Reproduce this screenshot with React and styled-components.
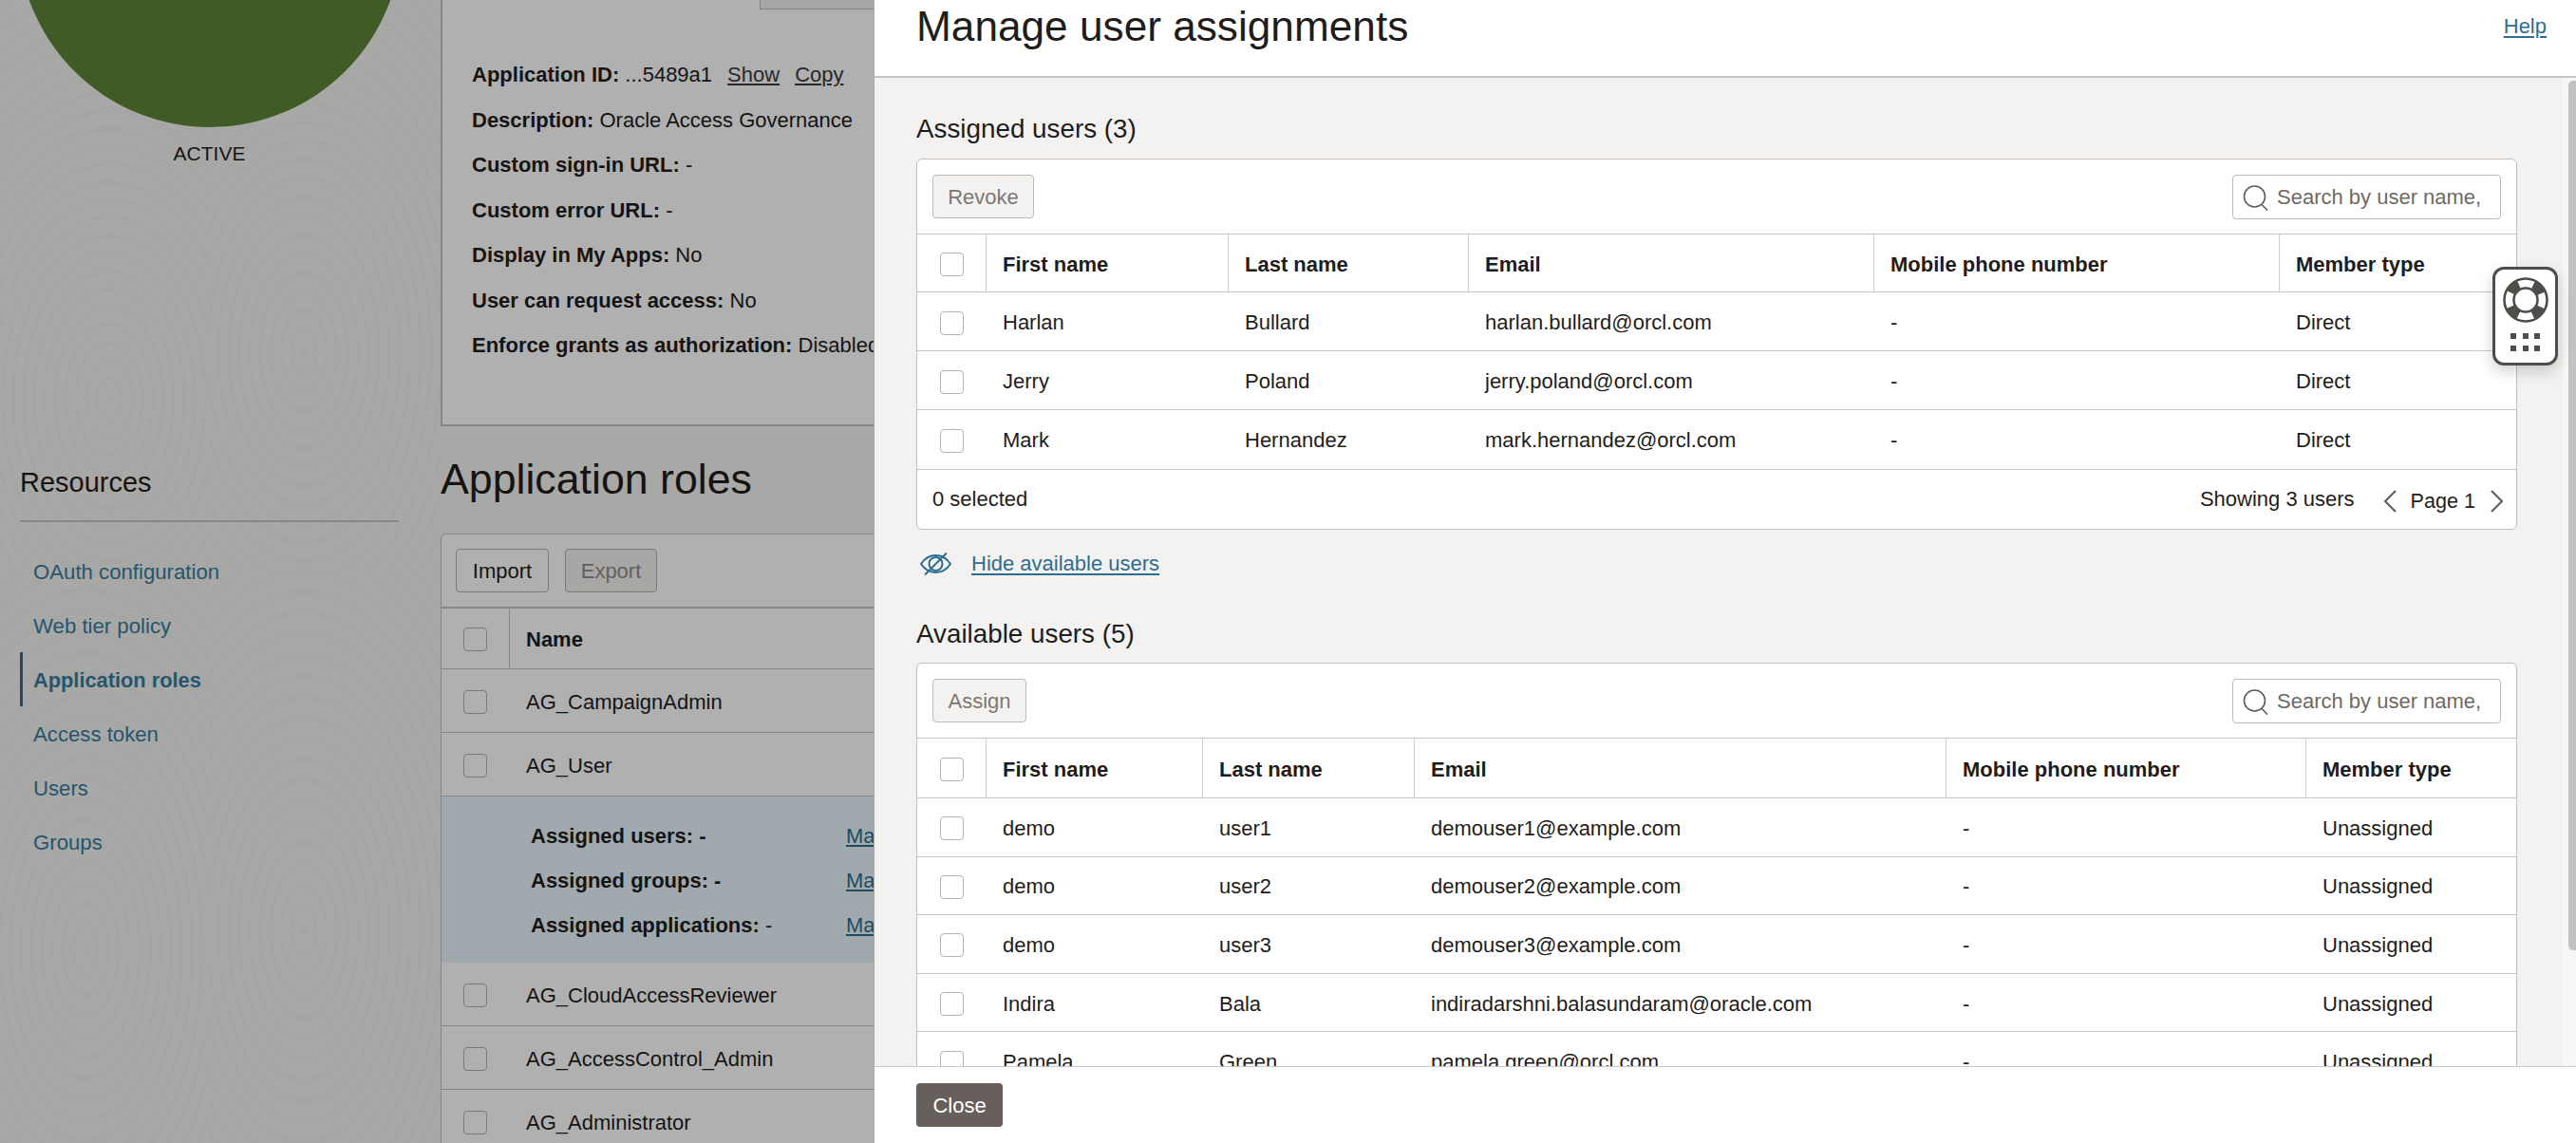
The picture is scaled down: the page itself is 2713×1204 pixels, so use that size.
import React from 'react';
import styled, { createGlobalStyle } from 'styled-components';

const GlobalStyle = createGlobalStyle`
  html, body {
    margin: 0;
    padding: 0;
    background: #fff;
  }
  * {
    box-sizing: border-box;
  }
  body {
    font-family: "Liberation Sans", Arial, sans-serif;
    font-size: 22px;
    color: #1f1d1b;
  }
`;

const Page = styled.div`
  position: relative;
  display: flex;
  width: 2713px;
  height: 1204px;
  overflow: hidden;
  background-color: #f3f3f1;
  background-image:
    repeating-radial-gradient(ellipse 100px 170px at 115px 420px, rgba(0, 0, 0, 0.007) 0 4px, transparent 4px 11px),
    repeating-radial-gradient(ellipse 100px 180px at 100px 370px, rgba(0, 0, 0, 0.007) 0 4px, transparent 4px 11px),
    repeating-radial-gradient(ellipse 120px 240px at 90px 400px, rgba(0, 0, 0, 0.007) 0 4px, transparent 4px 11px),
    repeating-radial-gradient(ellipse 120px 240px at 100px 380px, rgba(0, 0, 0, 0.007) 0 4px, transparent 4px 11px);
  background-size: 220px 600px, 244px 600px, 220px 604px, 244px 604px;
  background-position: 0 0, 220px 0, 0 600px, 220px 600px;
  background-repeat: no-repeat;
`;

const Sidebar = styled.aside`
  flex: 0 0 464px;
  min-width: 0;
  padding: 0 44px 0 21px;
`;

const StatusCircle = styled.div`
  width: 404px;
  height: 404px;
  margin: -270px -2.5px 0;
  border-radius: 50%;
  background: #5e8536;
`;

const StatusLabel = styled.div`
  margin-top: 13px;
  line-height: 30px;
  font-size: 21px;
  text-align: center;
`;

const ResourcesTitle = styled.h2`
  margin: 313px 0 0;
  height: 60px;
  padding-bottom: 24px;
  line-height: 36px;
  font-size: 29px;
  font-weight: 400;
  border-bottom: 2px solid #c4c4c2;
`;

const Nav = styled.nav`
  margin-top: 23px;
`;

const NavItem = styled.a`
  display: block;
  height: 57px;
  line-height: 59px;
  padding-left: 11px;
  border-left: 3px solid ${p => (p.$active ? '#2f6f8f' : 'transparent')};
  color: #367d9e;
  font-size: ${p => (p.$active ? 21.8 : 22.2)}px;
  font-weight: ${p => (p.$active ? 700 : 400)};
`;

const Main = styled.main`
  flex: 1;
  min-width: 0;
`;

const DetailPanel = styled.section`
  height: 449px;
  padding-bottom: 62px;
  background: #fff;
  border-left: 2px solid #c2c2c0;
  border-bottom: 2px solid #c2c2c0;
`;

const CutOffButton = styled.div`
  width: 300px;
  height: 10px;
  margin-left: 334px;
  margin-bottom: 45px;
  background: #f3f2f1;
  border-left: 1px solid #bbb;
  border-bottom: 1px solid #bbb;
`;

const DetailLine = styled.div`
  height: 47.5px;
  line-height: 47.5px;
  padding-left: 31px;
  white-space: nowrap;
`;

const Strong = styled.b`
  font-weight: 700;
`;

const PlainLink = styled.a`
  margin-left: ${p => p.$gap || 0}px;
  color: #3a3a38;
  text-decoration: underline;
`;

const RolesTitle = styled.h1`
  margin: 30px 0 31px;
  line-height: 52px;
  font-size: 44.7px;
  font-weight: 400;
`;

const RolesCard = styled.section`
  background: #fff;
  border-left: 1px solid #c4c4c2;
  border-top: 1px solid #c4c4c2;
  border-top-left-radius: 6px;
`;

const RolesToolbar = styled.div`
  display: flex;
  gap: 17px;
  height: 78px;
  padding: 15px 0 0 15px;
  border-bottom: 2px solid #c4c4c2;
`;

const RoleButton = styled.button`
  width: ${p => p.$width}px;
  height: 46px;
  padding: 2px 0 0;
  font: inherit;
  color: ${p => (p.$disabled ? '#8f8b88' : '#1f1d1b')};
  background: ${p => (p.$disabled ? '#f3f2f1' : '#fff')};
  border: 1px solid #b5b2af;
  border-radius: 4px;
`;

const RoleRow = styled.div`
  display: flex;
  align-items: center;
  height: ${p => p.$height || 67}px;
  border-bottom: 1px solid #c4c4c2;
  font-weight: ${p => (p.$head ? 700 : 400)};
`;

const RoleCheckCell = styled.div`
  flex: 0 0 72px;
  align-self: stretch;
  display: flex;
  align-items: center;
  padding: 2px 0 0 23px;
  border-right: ${p => (p.$head ? '1px solid #c4c4c2' : '1px solid transparent')};
`;

const RoleName = styled.div`
  padding: 3px 0 0 17px;
`;

const RoleDetails = styled.div`
  display: grid;
  grid-template-columns: 332px 1fr;
  align-content: start;
  height: 175px;
  padding: 18px 0 0 94px;
  background: #e8f6fc;
  grid-auto-rows: 47px;
  line-height: 47px;
`;

const RoleLink = styled.a`
  color: #2f6f8f;
  text-decoration: underline;
`;

const Scrim = styled.div`
  position: absolute;
  inset: 0;
  background: rgba(0, 0, 0, 0.31);
`;

const Drawer = styled.div`
  position: absolute;
  top: 0;
  right: 0;
  bottom: 0;
  left: 920px;
  display: flex;
  flex-direction: column;
  background: #fff;
  border-left: 1px solid #a8a8a6;
`;

const DrawerHeader = styled.header`
  flex: 0 0 82px;
  display: flex;
  justify-content: space-between;
  padding: 3px 31px 0 44px;
  border-bottom: 2px solid #c6c6c4;
`;

const DrawerTitle = styled.h1`
  margin: 0;
  line-height: 50px;
  font-size: 44.2px;
  font-weight: 400;
`;

const Link = styled.a`
  color: #2f6d90;
  text-decoration: underline;
  text-underline-offset: 3px;
`;

const HelpLink = styled(Link)`
  line-height: 50px;
`;

const DrawerBody = styled.div`
  position: relative;
  flex: 1;
  min-height: 0;
  overflow: hidden;
  padding: 37px 62px 0 44px;
  background: #f3f2f1;
`;

const ScrollTrack = styled.div`
  position: absolute;
  top: 0;
  right: 0;
  bottom: 0;
  width: 16px;
  padding: 3px 0 0 7px;
  background: #f7f6f5;
  border-left: 1px solid #eeeded;
`;

const ScrollThumb = styled.div`
  height: 916px;
  background: #c2c2c2;
  border-radius: 5px 0 0 5px;
`;

const SectionTitle = styled.h2`
  margin: ${p => p.$top || 0}px 0 ${p => p.$bottom}px;
  line-height: 34px;
  font-size: 27.8px;
  font-weight: 400;
`;

const Card = styled.section`
  background: #fff;
  border: 1px solid #c2bfbc;
  border-radius: 6px;
  overflow: hidden;
`;

const Toolbar = styled.div`
  display: flex;
  align-items: center;
  justify-content: space-between;
  height: 79px;
  padding: 0 16px;
  border-bottom: 1px solid #c9c7c5;
`;

const DisabledButton = styled.button`
  width: ${p => p.$width}px;
  height: 46px;
  padding: 2px 0 0;
  font: inherit;
  color: #7d7773;
  background: #f3f2f1;
  border: 1px solid #bdbab7;
  border-radius: 4px;
`;

const SearchBox = styled.div`
  display: flex;
  align-items: center;
  gap: 9px;
  width: 283px;
  height: 47px;
  padding: 2px 0 0 10px;
  background: #fff;
  border: 1px solid #bdbab7;
  border-radius: 4px;
  color: #6f6964;
  white-space: nowrap;
  overflow: hidden;
`;

const Row = styled.div`
  display: grid;
  grid-template-columns: ${p => p.$cols};
  height: ${p => p.$height}px;
  border-bottom: 1px solid ${p => (p.$last ? 'transparent' : '#c9c7c5')};
  font-weight: ${p => (p.$head ? 700 : 400)};
`;

const Cell = styled.div`
  display: flex;
  align-items: center;
  padding: 3px 0 0 17px;
  white-space: nowrap;
  border-right: ${p => (p.$divider ? '1px solid #d0cecc' : 'none')};
`;

const CheckCell = styled(Cell)`
  padding-left: 24px;
`;

const Checkbox = styled.span`
  display: block;
  width: 25px;
  height: 25px;
  background: #fff;
  border: 1px solid #b5b2af;
  border-radius: 4px;
`;

const CardFooter = styled.div`
  display: flex;
  align-items: center;
  justify-content: space-between;
  height: 63px;
  padding: 0 13px 0 16px;
  border-top: 1px solid #c9c7c5;
`;

const Pager = styled.div`
  display: flex;
  align-items: center;
`;

const PageLabel = styled.span`
  margin: 4px 15px 0 14px;
  font-size: 21.6px;
`;

const PagerIcon = styled.svg`
  display: block;
  margin-top: 4px;
  margin-left: ${p => p.$left || 0}px;
`;

const ToggleRow = styled.div`
  display: flex;
  align-items: center;
  gap: 21px;
  height: 26px;
  margin: 23px 0 0 4px;
`;

const DrawerFooter = styled.footer`
  flex: 0 0 81px;
  padding: 17px 0 0 44px;
  background: #fff;
  border-top: 1px solid #c9c7c5;
`;

const CloseButton = styled.button`
  width: 91px;
  height: 46px;
  padding: 2px 0 0;
  font: inherit;
  color: #fff;
  background: #665f5b;
  border: none;
  border-radius: 4px;
`;

const HelpWidget = styled.div`
  position: absolute;
  top: 281px;
  left: 2625px;
  width: 69px;
  height: 104px;
  display: flex;
  flex-direction: column;
  align-items: center;
  padding-top: 8px;
  background: #fff;
  border: 3px solid #4f4d4a;
  border-radius: 12px;
  box-shadow: 0 6px 16px rgba(0, 0, 0, 0.18);
`;

const DotGrid = styled.div`
  display: grid;
  grid-template-columns: repeat(3, 6px);
  gap: 7px 6.5px;
  margin-top: 11px;
`;

const Dot = styled.span`
  height: 6px;
  background: #4f4d4a;
`;

const SearchIcon = () => (
  <svg width="27" height="27" viewBox="0 0 27 27" fill="none" stroke="#5f5a56" strokeWidth="1.6">
    <circle cx="12.5" cy="12" r="11" />
    <path d="M20 20.5 L26 26.5" />
  </svg>
);

const Chevron = ({ left, dir }) => (
  <PagerIcon $left={left} width="15" height="24" viewBox="0 0 15 24" fill="none" stroke="#5f5a56" strokeWidth="2">
    <path d={dir === 'left' ? 'M13 1 L2 12 L13 23' : 'M2 1 L13 12 L2 23'} />
  </PagerIcon>
);

const EyeOffIcon = () => (
  <svg width="33" height="24" viewBox="0 0 33 24" fill="none" stroke="#2f6d90" strokeWidth="2">
    <path d="M1 12 C9 0 24 0 32 12 C24 24 9 24 1 12 Z" />
    <circle cx="16.5" cy="12" r="7" />
    <path d="M5 23.5 L28 .5" />
  </svg>
);

const LifebuoyIcon = () => (
  <svg width="48" height="48" viewBox="0 0 48 48" fill="none" stroke="#4f4d4a">
    <circle cx="24" cy="24" r="17.5" strokeWidth="9" strokeDasharray="12.2 15.29" transform="rotate(25 24 24)" />
    <circle cx="24" cy="24" r="22.5" strokeWidth="2.6" />
    <circle cx="24" cy="24" r="12.5" strokeWidth="2.6" />
  </svg>
);

const assignedCols = '73px 255px 253px 427px 427px 1fr';
const availableCols = '73px 228px 223px 560px 379px 1fr';
const columnNames = ['First name', 'Last name', 'Email', 'Mobile phone number', 'Member type'];

const assignedUsers = [
  ['Harlan', 'Bullard', 'harlan.bullard@orcl.com', '-', 'Direct'],
  ['Jerry', 'Poland', 'jerry.poland@orcl.com', '-', 'Direct'],
  ['Mark', 'Hernandez', 'mark.hernandez@orcl.com', '-', 'Direct']
];

const availableUsers = [
  ['demo', 'user1', 'demouser1@example.com', '-', 'Unassigned'],
  ['demo', 'user2', 'demouser2@example.com', '-', 'Unassigned'],
  ['demo', 'user3', 'demouser3@example.com', '-', 'Unassigned'],
  ['Indira', 'Bala', 'indiradarshni.balasundaram@oracle.com', '-', 'Unassigned'],
  ['Pamela', 'Green', 'pamela.green@orcl.com', '-', 'Unassigned']
];

const UserTable = ({ cols, users, headHeight, rowHeight, lastBorderless }) => (
  <>
    <Row $cols={cols} $height={headHeight} $head>
      <CheckCell $divider>
        <Checkbox />
      </CheckCell>
      {columnNames.map((name, i) => (
        <Cell key={name} $divider={i < columnNames.length - 1}>
          {name}
        </Cell>
      ))}
    </Row>
    {users.map((user, i) => (
      <Row key={user[2]} $cols={cols} $height={rowHeight} $last={lastBorderless && i === users.length - 1}>
        <CheckCell>
          <Checkbox />
        </CheckCell>
        {user.map((value, j) => (
          <Cell key={j}>{value}</Cell>
        ))}
      </Row>
    ))}
  </>
);

const Search = () => (
  <SearchBox>
    <SearchIcon />
    Search by user name,
  </SearchBox>
);

const details = [
  ['Description:', 'Oracle Access Governance'],
  ['Custom sign-in URL:', '-'],
  ['Custom error URL:', '-'],
  ['Display in My Apps:', 'No'],
  ['User can request access:', 'No'],
  ['Enforce grants as authorization:', 'Disabled']
];

const navItems = ['OAuth configuration', 'Web tier policy', 'Application roles', 'Access token', 'Users', 'Groups'];

const RoleLine = ({ name }) => (
  <RoleRow>
    <RoleCheckCell>
      <Checkbox />
    </RoleCheckCell>
    <RoleName>{name}</RoleName>
  </RoleRow>
);

export default function App() {
  return (
    <Page>
      <GlobalStyle />
      <Sidebar>
        <StatusCircle />
        <StatusLabel>ACTIVE</StatusLabel>
        <ResourcesTitle>Resources</ResourcesTitle>
        <Nav>
          {navItems.map(item => (
            <NavItem key={item} $active={item === 'Application roles'}>
              {item}
            </NavItem>
          ))}
        </Nav>
      </Sidebar>

      <Main>
        <DetailPanel>
          <CutOffButton />
          <DetailLine>
            <Strong>Application ID:</Strong> ...5489a1
            <PlainLink $gap={16}>Show</PlainLink>
            <PlainLink $gap={16}>Copy</PlainLink>
          </DetailLine>
          {details.map(([label, value]) => (
            <DetailLine key={label}>
              <Strong>{label}</Strong> {value}
            </DetailLine>
          ))}
        </DetailPanel>
        <RolesTitle>Application roles</RolesTitle>
        <RolesCard>
          <RolesToolbar>
            <RoleButton $width={98}>Import</RoleButton>
            <RoleButton $width={97} $disabled>
              Export
            </RoleButton>
          </RolesToolbar>
          <RoleRow $head $height={64}>
            <RoleCheckCell $head>
              <Checkbox />
            </RoleCheckCell>
            <RoleName>Name</RoleName>
          </RoleRow>
          <RoleLine name="AG_CampaignAdmin" />
          <RoleLine name="AG_User" />
          <RoleDetails>
            <Strong>Assigned users: -</Strong>
            <RoleLink>Manage</RoleLink>
            <Strong>Assigned groups: -</Strong>
            <RoleLink>Manage</RoleLink>
            <span>
              <Strong>Assigned applications:</Strong> -
            </span>
            <RoleLink>Manage</RoleLink>
          </RoleDetails>
          <RoleLine name="AG_CloudAccessReviewer" />
          <RoleLine name="AG_AccessControl_Admin" />
          <RoleLine name="AG_Administrator" />
        </RolesCard>
      </Main>

      <Scrim />

      <Drawer>
        <DrawerHeader>
          <DrawerTitle>Manage user assignments</DrawerTitle>
          <HelpLink>Help</HelpLink>
        </DrawerHeader>
        <DrawerBody>
          <SectionTitle $bottom={14}>Assigned users (3)</SectionTitle>
          <Card>
            <Toolbar>
              <DisabledButton $width={107}>Revoke</DisabledButton>
              <Search />
            </Toolbar>
            <UserTable cols={assignedCols} users={assignedUsers} headHeight={61} rowHeight={62} lastBorderless />
            <CardFooter>
              <span>0 selected</span>
              <Pager>
                <span>Showing 3 users</span>
                <Chevron dir="left" left={30} />
                <PageLabel>Page 1</PageLabel>
                <Chevron dir="right" />
              </Pager>
            </CardFooter>
          </Card>
          <ToggleRow>
            <EyeOffIcon />
            <Link>Hide available users</Link>
          </ToggleRow>
          <SectionTitle $top={44} $bottom={13}>
            Available users (5)
          </SectionTitle>
          <Card>
            <Toolbar>
              <DisabledButton $width={99}>Assign</DisabledButton>
              <Search />
            </Toolbar>
            <UserTable cols={availableCols} users={availableUsers} headHeight={63} rowHeight={61.6} />
          </Card>
          <ScrollTrack>
            <ScrollThumb />
          </ScrollTrack>
        </DrawerBody>
        <DrawerFooter>
          <CloseButton>Close</CloseButton>
        </DrawerFooter>
      </Drawer>

      <HelpWidget>
        <LifebuoyIcon />
        <DotGrid>
          {[0, 1, 2, 3, 4, 5].map(i => (
            <Dot key={i} />
          ))}
        </DotGrid>
      </HelpWidget>
    </Page>
  );
}
